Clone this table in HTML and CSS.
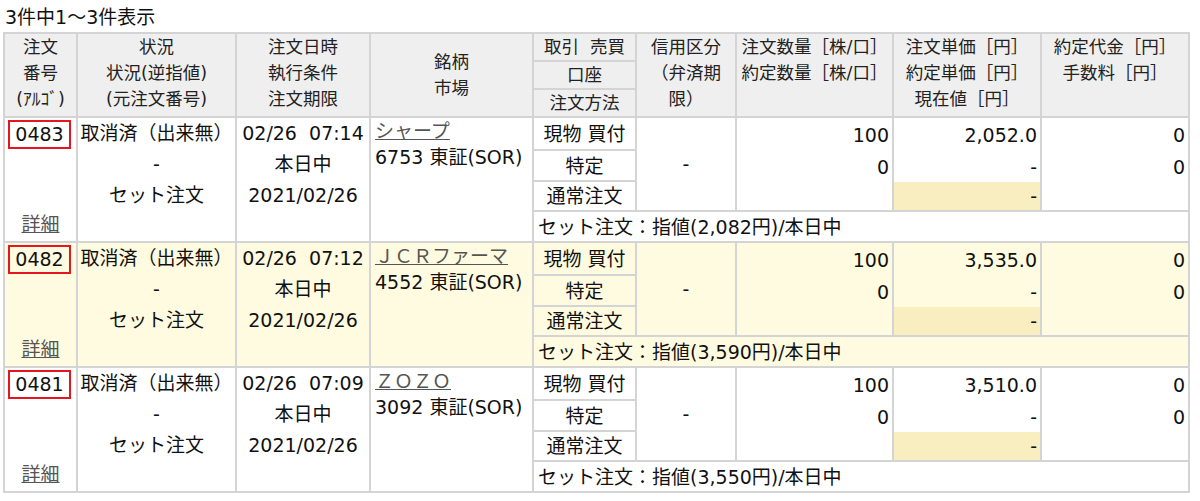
FILE: index.html
```html
<!DOCTYPE html>
<html lang="ja">
<head>
<meta charset="utf-8">
<title>注文一覧</title>
<link rel="stylesheet" href="styles.css">
</head>
<body>
<div class="count">3件中1〜3件表示</div>
<table class="orders">
<colgroup>
<col class="c1"><col class="c2"><col class="c3"><col class="c4"><col class="c5"><col class="c6"><col class="c7"><col class="c8"><col class="c9">
</colgroup>
<thead>
<tr class="h1">
<th rowspan="3">注文<br>番号<br>(ｱﾙｺﾞ)</th>
<th rowspan="3">状況<br>状況(逆指値)<br>(元注文番号)</th>
<th rowspan="3">注文日時<br>執行条件<br>注文期限</th>
<th rowspan="3" class="mid">銘柄<br>市場</th>
<th class="sub">取引&nbsp;&nbsp;売買</th>
<th rowspan="3">信用区分<br>（弁済期限）</th>
<th rowspan="3">注文数量［株/口］<br>約定数量［株/口］</th>
<th rowspan="3">注文単価［円］<br>約定単価［円］<br>現在値［円］</th>
<th rowspan="3">約定代金［円］<br>手数料［円］</th>
</tr>
<tr class="h2"><th class="sub">口座</th></tr>
<tr class="h3"><th class="sub">注文方法</th></tr>
</thead>
<tbody>
<tr class="s1">
<td rowspan="4" class="no"><div class="nocell"><span class="nobox">0483</span><a class="lnk" href="#">詳細</a></div></td>
<td rowspan="4" class="st"><div>取消済（出来無）</div><div>-</div><div>セット注文</div></td>
<td rowspan="4" class="st"><div>02/26&nbsp;&nbsp;07:14</div><div>本日中</div><div>2021/02/26</div></td>
<td rowspan="4" class="nm"><a class="lnk" href="#">シャープ</a><br>6753 東証(SOR)</td>
<td class="ac">現物&nbsp;買付</td>
<td rowspan="3" class="ac">-</td>
<td class="r nb">100</td>
<td class="r nb">2,052.0</td>
<td class="r nb">0</td>
</tr>
<tr class="s2"><td class="ac">特定</td><td class="r nb">0</td><td class="r nb">-</td><td class="r nb">0</td></tr>
<tr class="s3"><td class="ac">通常注文</td><td class="r"></td><td class="r hl">-</td><td class="r"></td></tr>
<tr class="s4"><td colspan="5" class="set">セット注文：指値(2,082円)/本日中</td></tr>

<tr class="s1 alt">
<td rowspan="4" class="no"><div class="nocell"><span class="nobox">0482</span><a class="lnk" href="#">詳細</a></div></td>
<td rowspan="4" class="st"><div>取消済（出来無）</div><div>-</div><div>セット注文</div></td>
<td rowspan="4" class="st"><div>02/26&nbsp;&nbsp;07:12</div><div>本日中</div><div>2021/02/26</div></td>
<td rowspan="4" class="nm"><a class="lnk" href="#">ＪＣＲファーマ</a><br>4552 東証(SOR)</td>
<td class="ac">現物&nbsp;買付</td>
<td rowspan="3" class="ac">-</td>
<td class="r nb">100</td>
<td class="r nb">3,535.0</td>
<td class="r nb">0</td>
</tr>
<tr class="s2 alt"><td class="ac">特定</td><td class="r nb">0</td><td class="r nb">-</td><td class="r nb">0</td></tr>
<tr class="s3 alt"><td class="ac">通常注文</td><td class="r"></td><td class="r hl">-</td><td class="r"></td></tr>
<tr class="s4 alt"><td colspan="5" class="set">セット注文：指値(3,590円)/本日中</td></tr>

<tr class="s1">
<td rowspan="4" class="no"><div class="nocell"><span class="nobox">0481</span><a class="lnk" href="#">詳細</a></div></td>
<td rowspan="4" class="st"><div>取消済（出来無）</div><div>-</div><div>セット注文</div></td>
<td rowspan="4" class="st"><div>02/26&nbsp;&nbsp;07:09</div><div>本日中</div><div>2021/02/26</div></td>
<td rowspan="4" class="nm"><a class="lnk" href="#">ＺＯＺＯ</a><br>3092 東証(SOR)</td>
<td class="ac">現物&nbsp;買付</td>
<td rowspan="3" class="ac">-</td>
<td class="r nb">100</td>
<td class="r nb">3,510.0</td>
<td class="r nb">0</td>
</tr>
<tr class="s2"><td class="ac">特定</td><td class="r nb">0</td><td class="r nb">-</td><td class="r nb">0</td></tr>
<tr class="s3"><td class="ac">通常注文</td><td class="r"></td><td class="r hl">-</td><td class="r"></td></tr>
<tr class="s4"><td colspan="5" class="set">セット注文：指値(3,550円)/本日中</td></tr>
</tbody>
</table>
</body>
</html>
```

FILE: styles.css
```css
* { box-sizing: border-box; }

body {
  margin: 0;
  padding: 5px 0 0 3px;
  background: #fff;
  color: #111;
  font-family: "DejaVu Sans", "Noto Sans CJK JP", sans-serif;
}

.count {
  font-size: 19px;
  line-height: 24px;
  padding-left: 2px;
  margin-bottom: 3px;
}

.orders {
  border-collapse: separate;
  border-spacing: 0;
  table-layout: fixed;
  width: 1187px;
  border-top: 2px solid #d4d4d4;
  border-left: 2px solid #d4d4d4;
  font-size: 19px;
}

.c1 { width: 73px; }
.c2 { width: 159px; }
.c3 { width: 134px; }
.c4 { width: 163px; }
.c5 { width: 103px; }
.c6 { width: 100px; }
.c7 { width: 157px; }
.c8 { width: 148px; }
.c9 { width: 148px; }

.orders th,
.orders td {
  border-right: 2px solid #d4d4d4;
  border-bottom: 2px solid #d4d4d4;
  padding: 0;
}

.orders th {
  background: #efefef;
  font-weight: normal;
  font-size: 17.5px;
  line-height: 26px;
  color: #222;
  text-align: center;
  vertical-align: top;
  padding: 0 2px;
}

.orders th.mid { vertical-align: middle; }
.orders th.sub { vertical-align: middle; }

.h1 { height: 27px; }
.h2 { height: 28px; }
.h3 { height: 27px; }

.s1 { height: 33px; }
.s2 { height: 31px; }
.s3 { height: 30px; }
.s4 { height: 31px; }

.orders td {
  line-height: 26px;
  vertical-align: middle;
}

.alt td { background: #fefbe0; }
.orders td.hl { background: #f9eebf; }

.orders td.no { vertical-align: top; }

.nocell {
  height: 123px;
  display: flex;
  flex-direction: column;
  justify-content: space-between;
  align-items: center;
  padding: 2px 0 5px;
}

.nobox {
  align-self: flex-start;
  margin-left: 3px;
  width: 63px;
  height: 29px;
  border: 2px solid #e5161d;
  text-align: center;
  line-height: 25px;
}

.lnk {
  color: #555;
  text-decoration: underline;
  line-height: 24px;
}

.orders td.st {
  vertical-align: top;
  text-align: center;
  line-height: 31px;
}

.orders td.nm {
  vertical-align: top;
  padding: 0 4px;
  white-space: nowrap;
}

.orders td.ac { text-align: center; }

.orders td.r {
  text-align: right;
  padding-right: 3px;
}

.orders td.nb { border-bottom: none; }

.orders td.set {
  padding-left: 4px;
}
```
